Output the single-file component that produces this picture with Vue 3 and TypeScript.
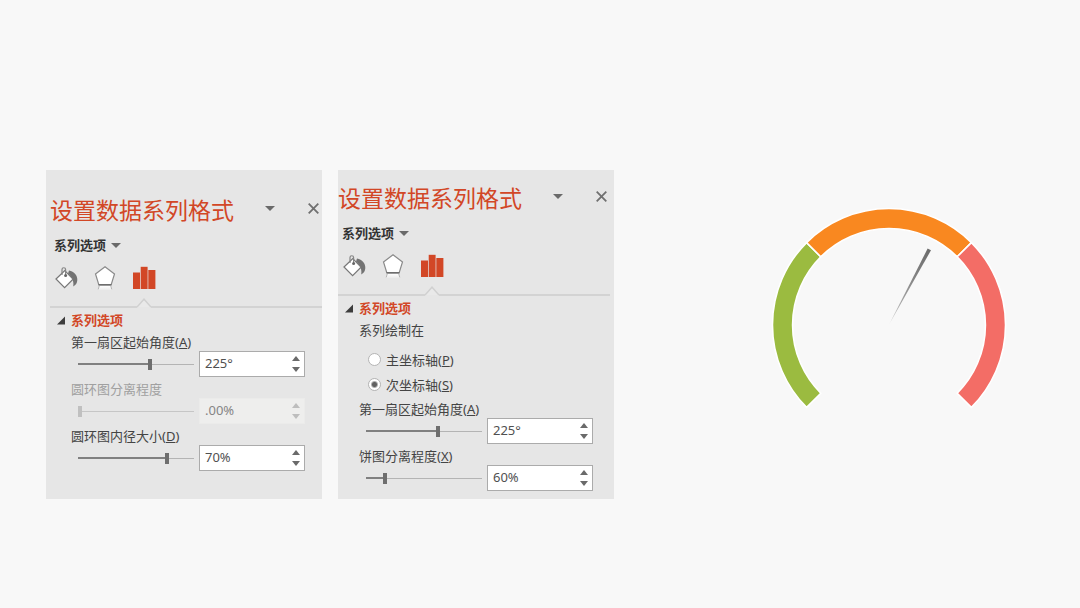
<script setup lang="ts">
import { reactive, ref } from 'vue'

interface Field {
  id: string
  label: string
  accel?: string
  value: number
  min: number
  max: number
  step: number
  unit: string
  disabled?: boolean
}

interface Panel {
  id: string
  axis: boolean
  fields: Field[]
}

const panels = reactive<Panel[]>([
  {
    id: 'ring',
    axis: false,
    fields: [
      { id: 'ring-angle', label: '第一扇区起始角度', accel: 'A', value: 225, min: 0, max: 360, step: 1, unit: '°' },
      { id: 'ring-split', label: '圆环图分离程度', value: 0, min: 0, max: 400, step: 1, unit: '%', disabled: true },
      { id: 'ring-hole', label: '圆环图内径大小', accel: 'D', value: 70, min: 0, max: 90, step: 1, unit: '%' },
    ],
  },
  {
    id: 'pie',
    axis: true,
    fields: [
      { id: 'pie-angle', label: '第一扇区起始角度', accel: 'A', value: 225, min: 0, max: 360, step: 1, unit: '°' },
      { id: 'pie-split', label: '饼图分离程度', accel: 'X', value: 60, min: 0, max: 400, step: 1, unit: '%' },
    ],
  },
])

const axis = ref('secondary')
const axes = [
  { value: 'primary', label: '主坐标轴', accel: 'P' },
  { value: 'secondary', label: '次坐标轴', accel: 'S' },
]

function format(f: Field): string {
  return f.disabled ? '.00%' : `${f.value}${f.unit}`
}

function setValue(f: Field, n: number): void {
  if (!Number.isNaN(n)) f.value = Math.min(f.max, Math.max(f.min, n))
}

function onText(f: Field, e: Event): void {
  setValue(f, parseFloat((e.target as HTMLInputElement).value))
}

function fill(f: Field): Record<string, string> {
  return { '--fill': `${((f.value - f.min) / (f.max - f.min)) * 100}%` }
}
</script>

<template>
  <main class="page">
    <div class="panels">
      <section v-for="p in panels" :key="p.id" class="panel" :class="p.id">
        <header class="title-row">
          <h2 class="title">设置数据系列格式</h2>
          <button type="button" class="icon-btn" aria-label="任务窗格选项">
            <svg width="10" height="5" viewBox="0 0 10 5"><path d="M0 0H10L5 5Z" fill="#6a6a6a" /></svg>
          </button>
          <button type="button" class="icon-btn close" aria-label="关闭">
            <svg width="11" height="11" viewBox="0 0 11 11">
              <path d="M0.7 0.7L10.3 10.3M10.3 0.7L0.7 10.3" stroke="#707070" stroke-width="1.8" fill="none" />
            </svg>
          </button>
        </header>

        <button type="button" class="picker">
          系列选项
          <svg width="10" height="5" viewBox="0 0 10 5"><path d="M0 0H10L5 5Z" fill="#6a6a6a" /></svg>
        </button>

        <nav class="tabs">
          <button type="button" class="tab" aria-label="填充与线条">
            <svg width="24" height="24" viewBox="0 0 24 24">
              <path d="M15 4.6C20.2 5.6 23.6 9.4 23.3 14.2C23.1 17 21.8 19.2 19.2 20.4C20 16.4 18.8 11.4 14 7.4Z" fill="#737373" />
              <path d="M2 13L10.8 4.6L19 13.2L10.6 21.6Z" fill="#fff" stroke="#777" stroke-width="1.2" />
              <path d="M8 9V3.4C8 1.2 11.6 1.2 11.6 3.4V9.6" fill="none" stroke="#858585" stroke-width="1.2" />
              <circle cx="11.6" cy="9.4" r="1.5" fill="#666" />
            </svg>
          </button>
          <button type="button" class="tab" aria-label="效果">
            <svg width="24" height="24" viewBox="0 0 24 24">
              <defs>
                <linearGradient :id="`fade-${p.id}`" x1="0" y1="0" x2="0" y2="1">
                  <stop offset="0" stop-color="#fff" />
                  <stop offset="1" stop-color="#fff" stop-opacity="0.2" />
                </linearGradient>
              </defs>
              <path d="M6.4 19.6H17.6L19 24H5Z" :fill="`url(#fade-${p.id})`" />
              <path d="M6.2 20L5.2 23.4M17.8 20L18.8 23.4" stroke="#b5b5b5" stroke-width="1" />
              <path d="M12 0.8L21.5 8L18.2 18.7H5.8L2.5 8Z" fill="#fff" stroke="#8a8a8a" stroke-width="1.2" />
              <path d="M5.6 18.8H18.4" stroke="#6e6e6e" stroke-width="1.6" />
            </svg>
          </button>
          <button type="button" class="tab" aria-label="系列选项">
            <svg width="24" height="24" viewBox="0 0 24 24">
              <path d="M1 6.5H8V23H1Z" fill="#d24726" />
              <path d="M8.7 0.8H15.6V23H8.7Z" fill="#d24726" />
              <path d="M16.3 4H23.4V23H16.3Z" fill="#d24726" />
            </svg>
          </button>
        </nav>

        <div class="rule">
          <svg width="14" height="10" viewBox="0 0 14 10">
            <path d="M0 9L7 1.2L14 9" fill="#e9e9e9" stroke="#d0d0d0" stroke-width="1.5" />
          </svg>
        </div>

        <h3 class="group">
          <button type="button" class="group-btn">
            <svg width="9" height="9" viewBox="0 0 9 9"><path d="M9 0.5V8.5H1Z" fill="#3c3c3c" /></svg>
            系列选项
          </button>
        </h3>

        <fieldset v-if="p.axis" class="axes">
          <legend class="label">系列绘制在</legend>
          <label v-for="a in axes" :key="a.value" class="radio">
            <input v-model="axis" type="radio" name="axis" :value="a.value" />
            <span>{{ a.label }}(<u>{{ a.accel }}</u>)</span>
          </label>
        </fieldset>

        <div v-for="f in p.fields" :key="f.id" class="field" :class="{ off: f.disabled }">
          <label class="label" :for="f.id">{{ f.label }}<template v-if="f.accel">(<u>{{ f.accel }}</u>)</template></label>
          <div class="controls">
            <input
              :id="f.id"
              v-model.number="f.value"
              class="slider"
              type="range"
              :min="f.min"
              :max="f.max"
              :step="f.step"
              :disabled="f.disabled"
              :style="fill(f)"
            />
            <div class="spin">
              <input
                class="spin-text"
                type="text"
                :aria-label="f.label"
                :value="format(f)"
                :disabled="f.disabled"
                @change="onText(f, $event)"
              />
              <div class="spin-btns">
                <button type="button" aria-label="增加" :disabled="f.disabled" @click="setValue(f, f.value + f.step)">
                  <svg width="8" height="5" viewBox="0 0 8 5"><path d="M0 5H8L4 0Z" fill="currentColor" /></svg>
                </button>
                <button type="button" aria-label="减少" :disabled="f.disabled" @click="setValue(f, f.value - f.step)">
                  <svg width="8" height="5" viewBox="0 0 8 5"><path d="M0 0H8L4 5Z" fill="currentColor" /></svg>
                </button>
              </div>
            </div>
          </div>
        </div>
      </section>
    </div>

    <svg class="gauge" width="240" height="240" viewBox="0 0 240 240" role="img" aria-label="仪表盘">
      <defs>
        <linearGradient id="needle" gradientUnits="userSpaceOnUse" x1="160" y1="44" x2="120" y2="119">
          <stop offset="0" stop-color="#6c6c6c" />
          <stop offset="0.4" stop-color="#858585" />
          <stop offset="1" stop-color="#c4c4c4" />
        </linearGradient>
      </defs>
      <g stroke="#fff" stroke-width="1.6">
        <path d="M37.6 202.4A116.5 116.5 0 0 1 37.6 37.6L51.8 51.8A96.5 96.5 0 0 0 51.8 188.2Z" fill="#9bbb40" />
        <path d="M37.6 37.6A116.5 116.5 0 0 1 202.4 37.6L188.2 51.8A96.5 96.5 0 0 0 51.8 51.8Z" fill="#f98820" />
        <path d="M202.4 37.6A116.5 116.5 0 0 1 202.4 202.4L188.2 188.2A96.5 96.5 0 0 0 188.2 51.8Z" fill="#f36d66" />
      </g>
      <path d="M120.4 119L158.6 43.6L162 45.2Z" fill="url(#needle)" />
    </svg>
  </main>
</template>

<style>
body {
  margin: 0;
  background: #f8f8f8;
}
</style>

<style scoped>
.page {
  box-sizing: border-box;
  min-height: 100vh;
  padding: 170px 46px 40px;
  display: grid;
  grid-template-columns: minmax(540px, 568fr) minmax(240px, 290fr);
  column-gap: 130px;
  align-items: start;
  background: #f8f8f8;
  color: #444;
  font-family: "Noto Sans", "Noto Sans CJK SC", sans-serif;
  font-size: 13px;
  line-height: 18px;
}

.panels {
  display: grid;
  grid-template-columns: 1fr 1fr;
  column-gap: 16px;
}

.panel {
  background: #e6e6e6;
  padding: 25px 0 8px 4px;
}

.panel.pie {
  padding: 13px 4px 8px 0;
}

button {
  margin: 0;
  padding: 0;
  border: 0;
  background: none;
  font: inherit;
  color: inherit;
}

svg {
  display: block;
  flex: none;
}

.title-row {
  display: flex;
  align-items: flex-start;
}

.title {
  margin: 0;
  flex: 1;
  font-size: 23px;
  line-height: 30px;
  font-weight: 400;
  color: #d24726;
  white-space: nowrap;
}

.icon-btn {
  width: 20px;
  height: 27px;
  display: flex;
  align-items: center;
  justify-content: center;
}

.close {
  width: 18px;
  margin-left: 24px;
}

.picker {
  margin: 10px 0 0 4px;
  height: 20px;
  display: flex;
  align-items: center;
  gap: 5px;
  font-weight: 700;
  color: #333;
}

.tabs {
  display: flex;
  gap: 15px;
  margin: 11px 0 8px 4px;
}

.tab {
  width: 24px;
  height: 24px;
}

.rule {
  display: flex;
  align-items: flex-end;
}

.rule::before,
.rule::after {
  content: "";
  height: 2px;
  background: #d3d3d3;
}

.rule::before {
  width: 87px;
}

.rule::after {
  flex: 1;
}

.group {
  margin: 2px 0 0 6px;
  font-size: 13px;
  font-weight: 700;
  color: #d24726;
}

.group-btn {
  height: 20px;
  display: flex;
  align-items: center;
  gap: 6px;
}

.axes {
  margin: 0 0 0 21px;
  padding: 0;
  border: 0;
}

.axes .label {
  margin-bottom: 8px;
}

.label {
  display: block;
  padding: 3px 0 0;
}

.radio {
  display: flex;
  align-items: center;
  gap: 5px;
  height: 25px;
  margin-left: 9px;
}

.radio input {
  appearance: none;
  margin: 0;
  width: 13px;
  height: 13px;
  border: 1px solid #b4b4b4;
  border-radius: 50%;
  background: #fff;
}

.radio input:checked {
  background: radial-gradient(circle, #606060 0 2px, #fff 4px);
}

.field {
  margin-left: 21px;
}

.controls {
  display: flex;
  align-items: center;
  gap: 5px;
  padding: 0 17px 0 7px;
}

.slider {
  appearance: none;
  flex: 1;
  width: 0;
  min-width: 0;
  height: 12px;
  margin: 0;
  background:
    linear-gradient(#808080, #808080) left center / var(--fill) 2px no-repeat,
    linear-gradient(#b4b4b4, #b4b4b4) left center / 100% 1px no-repeat;
}

.slider::-webkit-slider-thumb {
  appearance: none;
  width: 4px;
  height: 11px;
  background: #6e6e6e;
}

.spin {
  box-sizing: border-box;
  width: 106px;
  height: 26px;
  display: flex;
  border: 1px solid #ababab;
  background: #fff;
}

.spin-text {
  flex: 1;
  min-width: 0;
  padding: 0 0 3px 5px;
  border: 0;
  background: none;
  font: inherit;
  color: #505050;
}

.spin-btns {
  width: 17px;
  display: flex;
  flex-direction: column;
  padding: 1px 0;
  color: #6a6a6a;
}

.spin-btns button {
  flex: 1;
  display: flex;
  align-items: center;
  justify-content: center;
}

.off .label {
  color: #a0a0a0;
}

.off .spin {
  border-color: #ebebea;
  background: #eeeeed;
}

.off .spin-text {
  color: #858585;
}

.off .spin-btns {
  color: #bdbdbd;
}

.off .slider {
  background: linear-gradient(#c6c6c6, #c6c6c6) left center / 100% 1px no-repeat;
}

.off .slider::-webkit-slider-thumb {
  background: #c0c0c0;
}

.gauge {
  margin-top: 35px;
  justify-self: center;
}
</style>
